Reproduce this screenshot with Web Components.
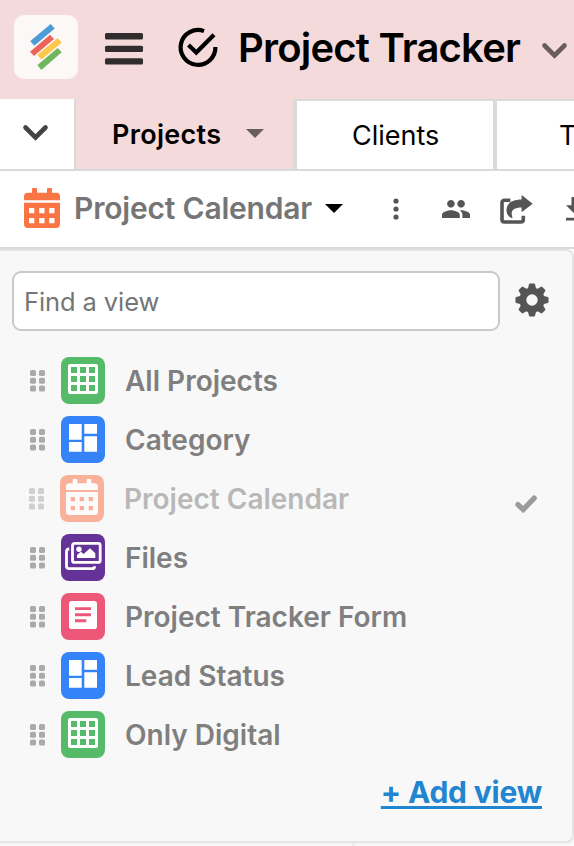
<!DOCTYPE html>
<html lang="en">
<head>
<meta charset="utf-8">
<title>Project Tracker</title>
<style>
  body {
    margin: 0;
    width: 574px;
    height: 846px;
    overflow: hidden;
    background: #fbfbfb;
    font-family: Inter, "Liberation Sans", sans-serif;
  }
</style>
</head>
<body>
<tracker-app></tracker-app>

<script>
// name: [width, height, shapes]
const ICONS = {
  logo: [64, 64, `
    <path fill="#4c9cd8" d="M16.3 26 36.7 9l4 4.5-20.4 17.3z"/>
    <path fill="#ec6359" d="M16 36.7 36 19.7l4 4.3-20 17z"/>
    <path fill="#fec84b" d="M23.5 39.7 43.7 23l4 4.5-20.4 17.2z"/>
    <path fill="#70b65c" d="M23.5 50 43.7 33l4 4.3-20.4 17.7z"/>`],
  menu: [38, 32, `
    <g fill="currentColor"><rect width="38" height="6.6" rx="1.5"/><rect y="12.7" width="38" height="6.4" rx="1.5"/><rect y="25.2" width="38" height="6.4" rx="1.5"/></g>`],
  done: [40, 40, `
    <g fill="none" stroke="currentColor" stroke-width="4.2"><path d="M26 4.1A17.4 17.4 0 1 0 37.4 20"/><path d="m10.500 18 7.8 7.6L36 7.8"/></g>`],
  chevron: [25, 16, `
    <path d="m2.5 2.5 10 10 10-10" fill="none" stroke="currentColor" stroke-width="4.6" stroke-linecap="round"/>`],
  caret: [18, 9, '<path d="M0 0h18L9 9z" fill="currentColor"/>'],
  calendar: [36, 40, `
    <g fill="currentColor"><rect x="8" width="5" height="8" rx="1"/><rect x="23" width="5" height="8" rx="1"/>
    <path d="M0 12.2V8.5Q0 4.7 3.5 4.7h29Q36 4.7 36 8.5v3.7z"/>
    <path fill-rule="evenodd" d="M0 14.8h36V36q0 4-4 4H4q-4 0-4-4zM5 20v5.3h5.3V20zm10.2 0v5.3h5.3V20zm10 0v5.3h5.3V20zM5 30v5.3h5.3V30zm10.2 0v5.3h5.3V30zm10 0v5.3h5.3V30z"/></g>`],
  more: [6, 22, '<g fill="currentColor"><circle cx="3" cy="3" r="2.6"/><circle cx="3" cy="11" r="2.6"/><circle cx="3" cy="19" r="2.6"/></g>'],
  people: [28, 18, `
    <path transform="scale(1.273 1.286) translate(-1 -5)" fill="currentColor" d="M16 11c1.66 0 2.99-1.34 2.99-3S17.66 5 16 5s-3 1.34-3 3 1.34 3 3 3zm-8 0c1.66 0 2.99-1.34 2.99-3S9.66 5 8 5 5 6.34 5 8s1.34 3 3 3zm0 2c-2.33 0-7 1.17-7 3.5V19h14v-2.5c0-2.33-4.67-3.5-7-3.5zm8 0c-.29 0-.62.02-.97.05 1.16.84 1.97 1.97 1.97 3.45V19h6v-2.5c0-2.33-4.67-3.5-7-3.5z"/>`],
  share: [33, 30, `
    <path d="M10.300 5.3H4.5Q2 5.3 2 7.8v16.6Q2 27 4.5 27h16.2q2.6 0 2.6-2.6v-3.700" fill="none" stroke="currentColor" stroke-width="3.6"/>
    <path d="M21.6 0v4.6C12 4.7 6.5 8.4 6.5 15.2c0 3.6 1.7 6.1 4.9 7.8.8.4 1.3 0 1-.8-2.2-6.1.6-9.6 9.2-9.6v4.7l11.1-8.6z" fill="currentColor"/>`],
  download: [20, 24, `
    <path d="M5.5 0h8.2v8.3h5.500L9.6 17.9 0 8.3h5.5zM0 20.800h19.2v2.800H0z" fill="currentColor"/>`],
  gear: [34, 34, `
    <g fill="currentColor" transform="translate(17 17)">
      <path fill-rule="evenodd" d="M0-12.6A12.6 12.6 0 1 1 0 12.6 12.6 12.6 0 1 1 0-12.6zM0-5.7A5.7 5.7 0 1 0 0 5.7 5.7 5.7 0 1 0 0-5.7z"/>
      ${[0, 45, 90, 135, 180, 225, 270, 315].map(a => `<path transform="rotate(${a})" d="M-4.2-11-3-15.7q.2-.8 1-.8h4q.8 0 1 .8L4.2-11z"/>`).join('')}
    </g>`],
  check: [22, 18, '<path d="m3 9.6 5.2 5 11-11.5" fill="none" stroke="currentColor" stroke-width="5.3" stroke-linecap="round"/>'],
  handle: [15, 22, `
    <g fill="currentColor">${[0, 9].map(x => [0, 7.8, 15.6].map(y => `<rect x="${x}" y="${y}" width="6" height="6" rx="1.6"/>`).join('')).join('')}</g>`],
  grid: [44, 47, `
    <path fill="#fff" fill-rule="evenodd" d="M9 7h26q2 0 2 2v26q0 2-2 2H9q-2 0-2-2V9q0-2 2-2z
      ${[10, 19, 28].map(x => [10, 19, 28].map(y => `M${x} ${y}v6h6v-6z`).join('')).join('')}"/>`],
  board: [44, 47, '<path fill="#fff" d="M8 8h12.7v15.7H8zM23.3 8H36v9.7H23.3zM8 26h12.7v9.7H8zM23.3 20.2H36v15.5H23.3z"/>'],
  calendarTile: [44, 47, `
    <g fill="#fff"><rect x="12.8" y="4" width="4.6" height="7" rx="1"/><rect x="26.7" y="4" width="4.6" height="7" rx="1"/>
    <path d="M6 15v-3.2q0-3.5 3.5-3.5h25q3.5 0 3.5 3.5V15z"/>
    <path fill-rule="evenodd" d="M6 17h32v19.5q0 3.5-3.5 3.5h-25Q6 40 6 36.5zM10.7 22v4.2H15V22zm9 0v4.2H24V22zm9 0v4.2H33V22zm-18 9v4.2H15V31zm9 0v4.2H24V31zm9 0v4.2H33V31z"/></g>`],
  files: [44, 47, `
    <g fill="none" stroke="#fff" stroke-width="2.8"><rect x="11.5" y="9.4" width="27.7" height="19" rx="2"/>
    <path d="M8.3 15Q5.5 15 5.5 17.5V32q0 2.7 2.7 2.7H31q2.6 0 2.6-2.5"/></g>
    <circle cx="18" cy="15.2" r="2.7" fill="#fff"/>
    <path d="M16 24v-3l3.8-3.3 2.8 2.4 6.4-5.8 5.3 5V24z" fill="#fff"/>`],
  form: [44, 47, `
    <rect x="8" y="8" width="28" height="28" rx="2.8" fill="#fff"/>
    <path d="M14 14.2h16v2.9H14zM14 20.3h16v2.9H14zM14 26.3h11.3v2.9H14z" fill="#ed5878"/>`]
}

const define = (name, html) => {
  customElements.define(name, class extends HTMLElement {
    constructor() {
      super()
      this.attachShadow({ mode: 'open' }).innerHTML = html
    }
  })
}

customElements.define('ui-icon', class extends HTMLElement {
  constructor() {
    super()
    this.attachShadow({ mode: 'open' })
  }

  connectedCallback() {
    const [width, height, shape] = ICONS[this.getAttribute('name')]
    this.shadowRoot.innerHTML = `
    <style>
    :host { display: block; flex: none; }
    svg { display: block; overflow: visible; }
    </style>
    <svg width="${width}" height="${height}" viewBox="0 0 ${width} ${height}">${shape}</svg>
    `
  }
})

define('app-header', `
  <style>
  :host {
    display: flex;
    align-items: flex-start;
    height: 99px;
    background: #f5dadb;
    color: #000;
  }
  .logo { margin: 15px 27px 0 14px; border-radius: 10px; background: #fcf8f7; }
  .menu { margin: 33px 35px 0 0; color: #312d2e; }
  .done { margin: 27px 20px 0 0; }
  h1 {
    flex: none;
    width: 304px;
    margin: 24px 0 0;
    font-size: 40px;
    line-height: 48px;
    font-weight: 600;
    letter-spacing: -0.8px;
    white-space: nowrap;
  }
  .chevron { margin-top: 43px; color: #6a5c5d; }
  </style>
  <ui-icon class="logo" name="logo"></ui-icon>
  <ui-icon class="menu" name="menu"></ui-icon>
  <ui-icon class="done" name="done"></ui-icon>
  <h1><slot></slot></h1>
  <ui-icon class="chevron" name="chevron"></ui-icon>
`)

define('tab-bar', `
  <style>
  :host {
    display: flex;
    box-sizing: border-box;
    height: 72px;
    border-bottom: 2px solid #dadada;
    background: #f5dadb;
    overflow: hidden;
  }
  .all {
    flex: none;
    box-sizing: border-box;
    width: 76px;
    padding: 26px 0 0 23px;
    border-right: 2px solid #dadada;
    background: #fff;
    color: #444;
  }
  </style>
  <div class="all"><ui-icon name="chevron"></ui-icon></div>
  <slot></slot>
`)

define('tab-item', `
  <style>
  :host {
    display: flex;
    flex: none;
    box-sizing: border-box;
    width: 200px;
    padding: 18px 0 0 55px;
    border: solid #dadada;
    border-width: 2px 2px 0;
    background: #fff;
    font-size: 27px;
    line-height: 34px;
  }
  :host([active]) {
    width: 219px;
    padding: 19px 0 0 36px;
    border-width: 0 2px 0 0;
    background: none;
    font-weight: 600;
    letter-spacing: 0.3px;
  }
  span { white-space: nowrap; }
  ui-icon { display: none; color: #6a5f5f; }
  :host([active]) span { width: 134px; }
  :host([active]) ui-icon { display: block; margin-top: 11px; }
  </style>
  <span><slot></slot></span><ui-icon name="caret"></ui-icon>
`)

define('view-toolbar', `
  <style>
  :host {
    display: flex;
    align-items: flex-start;
    box-sizing: border-box;
    height: 78px;
    border-bottom: 2px solid #dadada;
    background: #fff;
    color: #555;
    overflow: hidden;
  }
  .calendar { margin: 17px 14px 0 24px; color: #fb7444; }
  .name {
    flex: none;
    width: 251px;
    margin-top: 19px;
    color: #757575;
    font-size: 30px;
    line-height: 36px;
    font-weight: 600;
    letter-spacing: -0.2px;
    white-space: nowrap;
  }
  .caret { margin: 33px 50px 0 0; color: #000; }
  .more { margin: 27px 43px 0 0; }
  .people { margin: 29px 30px 0 0; }
  .share { margin: 24px 33px 0 0; }
  .download { margin-top: 26px; }
  </style>
  <ui-icon class="calendar" name="calendar"></ui-icon>
  <div class="name"><slot></slot></div>
  <ui-icon class="caret" name="caret"></ui-icon>
  <ui-icon class="more" name="more"></ui-icon>
  <ui-icon class="people" name="people"></ui-icon>
  <ui-icon class="share" name="share"></ui-icon>
  <ui-icon class="download" name="download"></ui-icon>
`)

define('view-panel', `
  <style>
  :host {
    display: flex;
    flex-direction: column;
    box-sizing: border-box;
    width: 574px;
    height: 594px;
    border: solid #e4e4e4;
    border-width: 2px 2px 2px 0;
    border-radius: 0 8px 8px 0;
    background: #f8f8f8;
    box-shadow: 0 1px 3px #0000000d;
  }
  .find { display: flex; gap: 15px; padding: 20px 0 26px 12px; }
  .field {
    box-sizing: border-box;
    width: 488px;
    height: 60px;
    padding: 12px 10px;
    border: 2px solid #c9c9c9;
    border-radius: 9px;
    background: #fff;
    color: #757575;
    font-size: 25.5px;
    line-height: 33px;
    letter-spacing: -0.1px;
  }
  ui-icon { margin-top: 12px; color: #555; }
  .rows { display: flex; flex-direction: column; gap: 12px; }
  a {
    align-self: flex-end;
    margin: 15px 30px 0 0;
    color: #2185d0;
    font-size: 30px;
    line-height: 38px;
    font-weight: 700;
    letter-spacing: -0.2px;
    text-decoration: underline 3px;
    text-underline-offset: 3px;
    text-decoration-skip-ink: none;
    white-space: nowrap;
  }
  </style>
  <div class="find">
    <div class="field">Find a view</div>
    <ui-icon name="gear"></ui-icon>
  </div>
  <div class="rows"><slot></slot></div>
  <a>+ Add view</a>
`)

define('view-row', `
  <style>
  :host {
    display: flex;
    align-items: flex-start;
    height: 47px;
    padding-left: 30px;
    color: #7f7f7f;
    font-size: 28px;
    font-weight: 600;
    line-height: 34px;
  }
  .handle { margin: 13px 16px 0 0; color: #aaa; }
  .label { flex: 1; margin: 7px 0 0 20px; white-space: nowrap; }
  .check { display: none; margin: 20px 35px 0 0; color: #9b9b9b; }
  ::slotted(ui-icon) { border-radius: 8px; }
  :host([selected]) { padding-left: 29px; }
  :host([selected]) .handle, :host([selected]) .label, :host([selected]) ::slotted(ui-icon) { opacity: 0.52; }
  :host([selected]) .check { display: block; }
  </style>
  <ui-icon class="handle" name="handle"></ui-icon>
  <slot name="tile"></slot>
  <div class="label"><slot></slot></div>
  <ui-icon class="check" name="check"></ui-icon>
`)

const TILES = {
  grid: '#56bb68',
  board: '#3483f8',
  calendarTile: '#fb7444',
  files: '#653297',
  form: '#ed5878'
}

const VIEWS = [
  ['grid', 'All Projects'],
  ['board', 'Category'],
  ['calendarTile', 'Project Calendar', true],
  ['files', 'Files'],
  ['form', 'Project Tracker Form'],
  ['board', 'Lead Status'],
  ['grid', 'Only Digital']
]

define('tracker-app', `
  <style>
  :host { display: block; width: 574px; height: 846px; overflow: hidden; }
  .last { padding-left: 62px; }
  .rest { width: 352px; height: 3px; border-right: 3px solid #ebebeb; }
  </style>
  <app-header>Project Tracker</app-header>
  <tab-bar>
    <tab-item active>Projects</tab-item>
    <tab-item>Clients</tab-item>
    <tab-item class="last">T</tab-item>
  </tab-bar>
  <view-toolbar>Project Calendar</view-toolbar>
  <view-panel>
    ${VIEWS.map(([icon, label, selected]) => `
    <view-row ${selected ? 'selected' : ''}><ui-icon slot="tile" name="${icon}" style="background: ${TILES[icon]}"></ui-icon>${label}</view-row>`).join('')}
  </view-panel>
  <div class="rest"></div>
`)
</script>
</body>
</html>
